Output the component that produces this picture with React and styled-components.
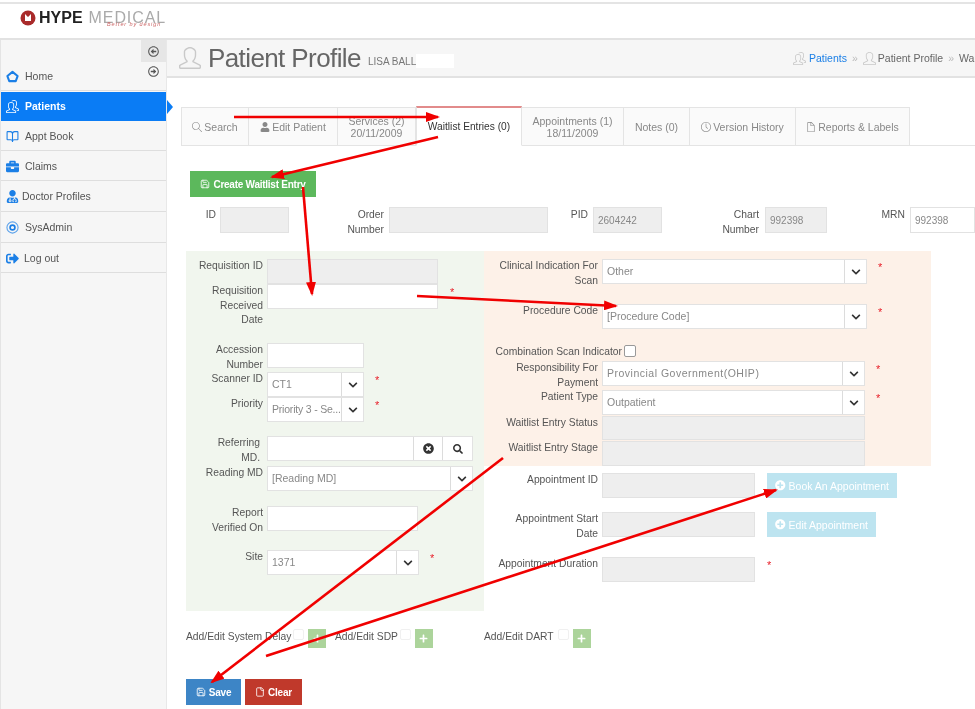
import React from 'react';
import styled, { createGlobalStyle } from 'styled-components';
import {
  SlUser, SlPeople, SlMagnifier, SlClock, SlDoc,
} from 'react-icons/sl';
import {
  FaBriefcase, FaUserMd, FaSignOutAlt, FaUser, FaChevronDown,
  FaTimesCircle, FaSearch, FaPlus, FaPlusCircle, FaRegArrowAltCircleLeft, FaRegArrowAltCircleRight,
} from 'react-icons/fa';
import { LuSave, LuFile, LuBookOpen } from 'react-icons/lu';

const GlobalStyle = createGlobalStyle`
  html, body { margin: 0; padding: 0; background: #fff; }
  body { font-family: "Liberation Sans", Arial, sans-serif; color: #555; }
`;

const Page = styled.div`
  position: relative;
  width: 975px;
  height: 709px;
  overflow: hidden;
  background: #fff;
  filter: blur(0.4px);
`;

const Header = styled.header`
  height: 28px;
  margin-top: 2px;
  padding: 0 0 6px 20px;
  border-top: 2px solid #e4e4e4;
  border-bottom: 2px solid #e2e2e2;
  display: flex;
  align-items: center;
  gap: 3px;
`;

const LogoMark = styled.svg`
  width: 16px;
  height: 16px;
`;

const LogoWrap = styled.div`
  position: relative;
  display: flex;
  align-items: center;
  font-size: 16px;
  line-height: 20px;
`;

const LogoStrong = styled.span`
  font-weight: 700;
  color: #222;
`;

const LogoLight = styled.span`
  color: #aaa;
  margin-left: 6px;
  letter-spacing: 0.9px;
`;

const LogoTag = styled.span`
  position: absolute;
  left: 68px;
  top: 13px;
  font-size: 5.5px;
  line-height: 6px;
  font-style: italic;
  letter-spacing: 0.9px;
  white-space: nowrap;
  color: #c66;
`;

const Body = styled.div`
  display: flex;
  height: 669px;
`;

const Sidebar = styled.nav`
  box-sizing: border-box;
  width: 167px;
  flex: none;
  background: #f6f6f6;
  border-left: 1px solid #e4e4e4;
  border-right: 1px solid #e8e8e8;
  display: flex;
  flex-direction: column;
`;

const ToggleBox = styled.div`
  position: absolute;
  right: 0;
  top: 0;
  width: 25px;
  height: 22px;
  background: #e6e6e6;
  font-size: 11px;
  display: flex;
  align-items: center;
  justify-content: center;
`;

const ToggleOpen = styled.div`
  position: absolute;
  right: 7px;
  top: 26px;
  font-size: 11px;
  line-height: 11px;
`;

const NavItem = styled.div`
  position: relative;
  height: ${p => p.$h || 29}px;
  margin-bottom: 1px;
  display: flex;
  align-items: ${p => (p.$first ? 'flex-end' : 'center')};
  padding-bottom: ${p => (p.$first ? '7px' : '0')};
  box-sizing: border-box;
  padding-left: ${p => p.$pl || 5}px;
  gap: ${p => p.$gap || 6}px;
  font-size: 10.5px;
  line-height: 13px;
  color: ${p => (p.$active ? '#fff' : '#555')};
  background: ${p => (p.$active ? '#0a7cf5' : 'transparent')};
  border-bottom: ${p => (p.$active ? 'none' : '1px solid #dedede')};
  font-weight: ${p => (p.$active ? 600 : 400)};
  > svg { color: ${p => (p.$active ? '#fff' : '#1b7fe6')}; font-size: 13px; flex: none; }
  ${p => p.$active && `
    &::after {
      content: '';
      position: absolute;
      right: -7px;
      top: 8px;
      border-left: 6px solid #0a7cf5;
      border-top: 7px solid transparent;
      border-bottom: 7px solid transparent;
    }
  `}
`;

const ToggleGlyphLeft = styled(FaRegArrowAltCircleLeft)`
  color: #555;
`;

const ToggleGlyphRight = styled(FaRegArrowAltCircleRight)`
  color: #555;
`;

const Main = styled.main`
  flex: 1;
  min-width: 0;
`;

const TitleBar = styled.div`
  height: 36px;
  background: #f6f6f6;
  border-bottom: 2px solid #e2e2e2;
  display: flex;
  align-items: center;
  padding-left: 12px;
  white-space: nowrap;
  overflow: hidden;
`;

const TitleIcon = styled(SlUser)`
  font-size: 22px;
  color: #c9c9c9;
  margin-right: 7px;
`;

const Title = styled.h1`
  margin: 0;
  font-size: 26px;
  font-weight: 400;
  letter-spacing: -0.6px;
  color: #666;
`;

const Subtitle = styled.span`
  margin: 6px 0 0 7px;
  font-size: 10px;
  color: #777;
`;

const Mask = styled.span`
  width: 38px;
  height: 14px;
  margin-top: 6px;
  background: #fff;
`;

const Crumbs = styled.div`
  margin-left: auto;
  width: 182px;
  flex: none;
  display: flex;
  align-items: center;
  gap: 2px;
  font-size: 10.5px;
  color: #666;
  overflow: hidden;
  svg { color: #c8c8c8; font-size: 13px; flex: none; }
`;

const CrumbLink = styled.span`
  color: #1b7fe6;
  margin-left: 1px;
`;

const CrumbDot = styled.span`
  color: #bbb;
  margin: 0 3px;
`;

const TabStrip = styled.div`
  margin: 27px 0 0 14px;
  height: 40px;
  border-bottom: 1px solid #e4e4e4;
  display: flex;
  align-items: flex-end;
`;

const Tab = styled.div`
  height: ${p => (p.$active ? 40 : 39)}px;
  width: ${p => p.$w}px;
  box-sizing: border-box;
  flex: none;
  display: flex;
  flex-direction: column;
  align-items: center;
  justify-content: center;
  background: ${p => (p.$active ? '#fff' : '#fafafa')};
  border: 1px solid #e4e4e4;
  border-left-width: ${p => (p.$first || p.$active ? 1 : 0)}px;
  border-top: ${p => (p.$active ? '2px solid #e28b8b' : '1px solid #e4e4e4')};
  border-bottom: ${p => (p.$active ? '1px solid #fff' : '1px solid #e4e4e4')};
  margin-bottom: -1px;
  font-size: ${p => (p.$active ? 10.2 : 10.5)}px;
  line-height: 12px;
  color: ${p => (p.$active ? '#333' : '#888')};
`;

const TabLine = styled.span`
  display: flex;
  align-items: center;
  gap: 2px;
  white-space: nowrap;
  svg { font-size: 10px; }
`;

const Content = styled.div`
  padding: 25px 0 0 19px;
`;

const Button = styled.button`
  display: inline-flex;
  align-items: center;
  justify-content: center;
  flex: none;
  gap: 3px;
  width: ${p => p.$w}px;
  height: ${p => p.$h || 26}px;
  margin-left: ${p => p.$ml || 0}px;
  padding: 0;
  border: 1px solid ${p => p.$bg};
  background: ${p => p.$bg};
  color: #fff;
  font: ${p => p.$weight || 400} ${p => p.$size || 10.5}px "Liberation Sans", Arial, sans-serif;
  letter-spacing: ${p => p.$ls || 0}px;
  white-space: nowrap;
`;

const TopFields = styled.div`
  margin-top: 10px;
  display: grid;
  grid-template-columns: 34px 69px 100px 159px 45px 69px 103px 62px 83px 65px;
  height: 26px;
`;

const TopLabel = styled.label`
  font-size: 10.3px;
  line-height: 15px;
  padding: 0 ${p => p.$pr ?? 4}px 0 0;
  color: #555;
  text-align: right;
`;

const Input = styled.div`
  box-sizing: border-box;
  width: ${p => (p.$w ? `${p.$w}px` : '100%')};
  height: ${p => p.$h || 25}px;
  flex: none;
  display: flex;
  align-items: center;
  padding-left: 4px;
  border: 1px solid #e2e2e2;
  background: ${p => (p.$off ? '#eeeeee' : '#fff')};
  font-size: 10px;
  color: #888;
  white-space: nowrap;
  overflow: hidden;
`;

const Panels = styled.div`
  display: flex;
  align-items: flex-start;
  margin-top: 18px;
`;

const GreenPanel = styled.section`
  width: 298px;
  height: 360px;
  box-sizing: border-box;
  background: #f1f6ee;
  padding-top: 8px;
`;

const RightColumn = styled.div`
  width: 447px;
`;

const OrangePanel = styled.section`
  height: 215px;
  box-sizing: border-box;
  background: #fdf1e8;
  padding-top: 8px;
`;

const Row = styled.div`
  display: flex;
  align-items: flex-start;
  margin-top: ${p => p.$mt || 0}px;
`;

const Label = styled.label`
  box-sizing: border-box;
  flex: none;
  width: ${p => p.$w}px;
  padding-right: ${p => p.$pr ?? 4}px;
  font-size: 10.3px;
  line-height: 14.7px;
  height: 15px;
  text-align: right;
  color: #555;
  white-space: pre-line;
`;

const SelectBox = styled.div`
  box-sizing: border-box;
  display: flex;
  width: ${p => p.$w}px;
  height: 25px;
  flex: none;
  background: #fff;
  border: 1px solid #e2e2e2;
`;

const SelectText = styled.div`
  flex: 1;
  min-width: 0;
  display: flex;
  align-items: center;
  padding: 0 0 2px 4px;
  font-size: 10.5px;
  letter-spacing: ${p => p.$ls || 0}px;
  color: #888;
  white-space: nowrap;
  overflow: hidden;
`;

const AddonButton = styled.div`
  width: ${p => p.$w || 21}px;
  flex: none;
  display: flex;
  align-items: center;
  justify-content: center;
  border-left: 1px solid #dcdcdc;
  color: #333;
  font-size: ${p => p.$size || 10}px;
`;

const Star = styled.span`
  flex: none;
  color: #e8202a;
  font-size: 11px;
  line-height: 14px;
  margin: 1px 0 0 ${p => p.$ml || 11}px;
`;

const Check = styled.span`
  box-sizing: border-box;
  flex: none;
  display: block;
  width: ${p => p.$size || 12}px;
  height: ${p => p.$size || 12}px;
  margin-left: ${p => p.$ml || 2}px;
  background: #fff;
  border: 1px solid ${p => p.$line || '#999'};
  border-radius: 2px;
`;

const AddRow = styled.div`
  display: grid;
  grid-template-columns: 149px 149px auto;
  margin-top: 18px;
  height: 20px;
`;

const AddItem = styled.div`
  display: flex;
  align-items: flex-start;
  font-size: 10.3px;
  line-height: 15px;
  color: #555;
`;

const PlusButton = styled.span`
  width: 18px;
  height: 19px;
  margin-left: 4px;
  display: flex;
  align-items: center;
  justify-content: center;
  background: #acd49b;
  color: #fff;
  font-size: 9px;
`;

const Actions = styled.div`
  display: flex;
  gap: 4px;
  margin-top: 30px;
`;

const CreateRow = styled.div`
  padding-left: 4px;
  height: 26px;
  display: flex;
`;

const ArrowLayer = styled.svg`
  position: absolute;
  left: 0;
  top: 0;
  width: 975px;
  height: 709px;
  pointer-events: none;
`;

const arrows = [
  [234, 117, 438, 117],
  [438, 137, 272, 177],
  [303, 187, 312, 294],
  [417, 296, 616, 306],
  [503, 458, 212, 682],
  [266, 656, 776, 490],
];

const Arrows = () => (
  <ArrowLayer viewBox="0 0 975 709">
    <defs>
      <marker id="head" markerWidth="14" markerHeight="10" refX="12" refY="5" orient="auto" markerUnits="userSpaceOnUse">
        <path d="M0 0 L14 5 L0 10 Z" fill="#f00000" />
      </marker>
    </defs>
    {arrows.map(([x1, y1, x2, y2]) => (
      <line key={`${x1}-${y1}`} x1={x1} y1={y1} x2={x2} y2={y2} stroke="#f00000" strokeWidth="2.6" markerEnd="url(#head)" />
    ))}
  </ArrowLayer>
);

const HomeGlyph = () => (
  <svg width="1em" height="1em" viewBox="0 0 14 14" fill="none" stroke="currentColor" strokeWidth="2.2" strokeLinejoin="round">
    <path d="M7 2 L12.5 6.5 L10.5 12 H3.5 L1.5 6.5 Z" />
  </svg>
);

const GearGlyph = () => (
  <svg width="1em" height="1em" viewBox="0 0 14 14" fill="none" stroke="currentColor">
    <circle cx="7" cy="7" r="6" strokeWidth="1.2" opacity="0.7" />
    <circle cx="7" cy="7" r="2.6" strokeWidth="1.8" />
  </svg>
);

const Select = ({ w, ls, children }) => (
  <SelectBox $w={w}>
    <SelectText $ls={ls}>{children}</SelectText>
    <AddonButton><FaChevronDown /></AddonButton>
  </SelectBox>
);

const App = () => (
  <Page>
    <GlobalStyle />
    <Header>
      <LogoMark viewBox="0 0 16 16">
        <circle cx="8" cy="8" r="7.5" fill="#a92b2b" />
        <path d="M5 4 L5 11 L11 11 L11 4 L8 7 Z" fill="#fff" />
      </LogoMark>
      <LogoWrap>
        <LogoStrong>HYPE</LogoStrong>
        <LogoLight>MEDICAL</LogoLight>
        <LogoTag>Better by design</LogoTag>
      </LogoWrap>
    </Header>
    <Body>
      <Sidebar>
        <NavItem $h={51} $first>
          <ToggleBox><ToggleGlyphLeft /></ToggleBox>
          <ToggleOpen><ToggleGlyphRight /></ToggleOpen>
          <HomeGlyph /> Home
        </NavItem>
        <NavItem $active><SlPeople /> Patients</NavItem>
        <NavItem><LuBookOpen /> Appt Book</NavItem>
        <NavItem><FaBriefcase /> Claims</NavItem>
        <NavItem $h={30} $gap={3}><FaUserMd /> Doctor Profiles</NavItem>
        <NavItem $h={30}><GearGlyph /> SysAdmin</NavItem>
        <NavItem $h={29} $gap={5}><FaSignOutAlt /> Log out</NavItem>
      </Sidebar>
      <Main>
        <TitleBar>
          <TitleIcon />
          <Title>Patient Profile</Title>
          <Subtitle>LISA BALL</Subtitle>
          <Mask />
          <Crumbs>
            <SlPeople /> <CrumbLink>Patients</CrumbLink>
            <CrumbDot>»</CrumbDot>
            <SlUser /> Patient Profile
            <CrumbDot>»</CrumbDot>
            Waitlist
          </Crumbs>
        </TitleBar>
        <TabStrip>
          <Tab $w={68} $first><TabLine><SlMagnifier /> Search</TabLine></Tab>
          <Tab $w={89}><TabLine><FaUser /> Edit Patient</TabLine></Tab>
          <Tab $w={78}><TabLine>Services (2)</TabLine><TabLine>20/11/2009</TabLine></Tab>
          <Tab $w={106} $active>Waitlist Entries (0)</Tab>
          <Tab $w={102}><TabLine>Appointments (1)</TabLine><TabLine>18/11/2009</TabLine></Tab>
          <Tab $w={66}><TabLine>Notes (0)</TabLine></Tab>
          <Tab $w={106}><TabLine><SlClock /> Version History</TabLine></Tab>
          <Tab $w={114}><TabLine><SlDoc /> Reports &amp; Labels</TabLine></Tab>
        </TabStrip>
        <Content>
          <CreateRow>
            <Button $w={126} $bg="#5cb85c" $weight={700} $size={10} $ls={-0.25}><LuSave /> Create Waitlist Entry</Button>
          </CreateRow>
          <TopFields>
            <TopLabel>ID</TopLabel>
            <Input $off $h={26} />
            <TopLabel $pr={5}><div>Order</div><div>Number</div></TopLabel>
            <Input $off $h={26} />
            <TopLabel $pr={5}>PID</TopLabel>
            <Input $off $h={26}>2604242</Input>
            <TopLabel $pr={6}><div>Chart</div><div>Number</div></TopLabel>
            <Input $off $h={26}>992398</Input>
            <TopLabel $pr={5}>MRN</TopLabel>
            <Input $h={26}>992398</Input>
          </TopFields>
          <Panels>
            <GreenPanel>
              <Row>
                <Label $w={81}>Requisition ID</Label>
                <Input $off $w={171} />
              </Row>
              <Row>
                <Label $w={81}>{'Requisition\nReceived\nDate'}</Label>
                <Input $w={171} />
                <Star $ml={12}>*</Star>
              </Row>
              <Row $mt={34}>
                <Label $w={81}>{'Accession\nNumber'}</Label>
                <Input $w={97} />
              </Row>
              <Row $mt={4}>
                <Label $w={81}>Scanner ID</Label>
                <Select w={97}>CT1</Select>
                <Star>*</Star>
              </Row>
              <Row>
                <Label $w={81}>Priority</Label>
                <Select w={97} ls={-0.2}>Priority 3 - Se...</Select>
                <Star>*</Star>
              </Row>
              <Row $mt={14}>
                <Label $w={81} $pr={7}>{'Referring\nMD.'}</Label>
                <SelectBox $w={206}>
                  <SelectText />
                  <AddonButton $w={28} $size={11}><FaTimesCircle /></AddonButton>
                  <AddonButton $w={29}><FaSearch /></AddonButton>
                </SelectBox>
              </Row>
              <Row $mt={5}>
                <Label $w={81}>Reading MD</Label>
                <Select w={206}>[Reading MD]</Select>
              </Row>
              <Row $mt={15}>
                <Label $w={81}>{'Report\nVerified On'}</Label>
                <Input $w={151} />
              </Row>
              <Row $mt={19}>
                <Label $w={81}>Site</Label>
                <Select w={152}>1371</Select>
                <Star>*</Star>
              </Row>
            </GreenPanel>
            <RightColumn>
              <OrangePanel>
                <Row>
                  <Label $w={118}>{'Clinical Indication For\nScan'}</Label>
                  <Select w={265}>Other</Select>
                  <Star>*</Star>
                </Row>
                <Row $mt={20}>
                  <Label $w={118}>Procedure Code</Label>
                  <Select w={265}>[Procedure Code]</Select>
                  <Star>*</Star>
                </Row>
                <Row $mt={16}>
                  <Label $w={138} $pr={0}>Combination Scan Indicator</Label>
                  <Check />
                </Row>
                <Row $mt={1}>
                  <Label $w={118}>{'Responsibility For\nPayment'}</Label>
                  <Select w={263} ls={0.5}>Provincial Government(OHIP)</Select>
                  <Star>*</Star>
                </Row>
                <Row $mt={4}>
                  <Label $w={118}>Patient Type</Label>
                  <Select w={263}>Outpatient</Select>
                  <Star>*</Star>
                </Row>
                <Row $mt={1}>
                  <Label $w={118}>Waitlist Entry Status</Label>
                  <Input $off $w={263} $h={24} />
                </Row>
                <Row $mt={1}>
                  <Label $w={118}>Waitlist Entry Stage</Label>
                  <Input $off $w={263} $h={25} />
                </Row>
              </OrangePanel>
              <Row $mt={7}>
                <Label $w={118}>Appointment ID</Label>
                <Input $off $w={153} />
                <Button $w={130} $h={25} $bg="#bde4f0" $ml={12}><FaPlusCircle /> Book An Appointment</Button>
              </Row>
              <Row $mt={14}>
                <Label $w={118}>{'Appointment Start\nDate'}</Label>
                <Input $off $w={153} />
                <Button $w={109} $h={25} $bg="#bde4f0" $ml={12}><FaPlusCircle /> Edit Appointment</Button>
              </Row>
              <Row $mt={20}>
                <Label $w={118}>Appointment Duration</Label>
                <Input $off $w={153} />
                <Star $ml={12}>*</Star>
              </Row>
            </RightColumn>
          </Panels>
          <AddRow>
            <AddItem>Add/Edit System Delay<Check $size={11} $line="#f0f0f0" /><PlusButton><FaPlus /></PlusButton></AddItem>
            <AddItem>Add/Edit SDP<Check $size={11} $line="#f0f0f0" /><PlusButton><FaPlus /></PlusButton></AddItem>
            <AddItem>Add/Edit DART<Check $size={11} $ml={4} $line="#f0f0f0" /><PlusButton><FaPlus /></PlusButton></AddItem>
          </AddRow>
          <Actions>
            <Button $w={55} $bg="#3d85c6" $weight={700} $size={10} $ls={-0.2}><LuSave /> Save</Button>
            <Button $w={57} $bg="#c0392b" $weight={700} $size={10} $ls={-0.2}><LuFile /> Clear</Button>
          </Actions>
        </Content>
      </Main>
    </Body>
    <Arrows />
  </Page>
);

export default App;
